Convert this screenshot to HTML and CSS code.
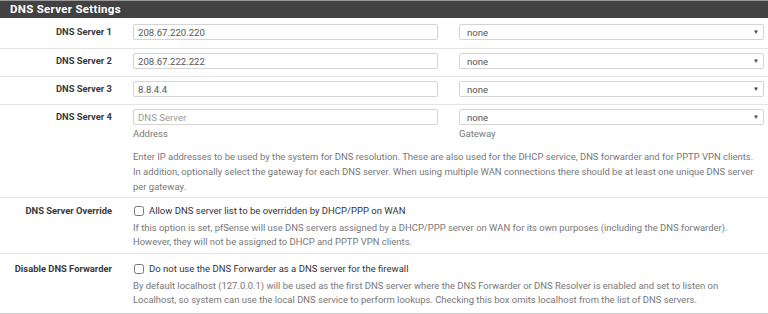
FILE: index.html
```html
<!DOCTYPE html>
<html lang="en">
<head>
    <meta charset="UTF-8">
    <meta name="viewport" content="width=device-width, initial-scale=1.0">
    <title>DNS Server Settings</title>
    <link rel="stylesheet" href="styles.css">
</head>
<body>
    <div class="panel">
        <div class="panel-heading">DNS Server Settings</div>
        <div class="panel-body">
            <div class="form-row first">
                <label class="row-label">DNS Server 1</label>
                <div class="row-content">
                    <div class="pair">
                        <input type="text" class="field" value="208.67.220.220">
                        <div class="select-wrap">
                            <select class="field"><option>none</option></select>
                            <span class="caret">&#9660;</span>
                        </div>
                    </div>
                </div>
            </div>
            <div class="form-row">
                <label class="row-label">DNS Server 2</label>
                <div class="row-content">
                    <div class="pair">
                        <input type="text" class="field" value="208.67.222.222">
                        <div class="select-wrap">
                            <select class="field"><option>none</option></select>
                            <span class="caret">&#9660;</span>
                        </div>
                    </div>
                </div>
            </div>
            <div class="form-row">
                <label class="row-label">DNS Server 3</label>
                <div class="row-content">
                    <div class="pair">
                        <input type="text" class="field" value="8.8.4.4">
                        <div class="select-wrap">
                            <select class="field"><option>none</option></select>
                            <span class="caret">&#9660;</span>
                        </div>
                    </div>
                </div>
            </div>
            <div class="form-row tall">
                <label class="row-label">DNS Server 4</label>
                <div class="row-content">
                    <div class="pair">
                        <input type="text" class="field" placeholder="DNS Server">
                        <div class="select-wrap">
                            <select class="field"><option>none</option></select>
                            <span class="caret">&#9660;</span>
                        </div>
                    </div>
                    <div class="pair captions">
                        <span>Address</span>
                        <span>Gateway</span>
                    </div>
                    <p class="help">Enter IP addresses to be used by the system for DNS resolution. These are also used for the DHCP service, DNS forwarder and for PPTP VPN clients.<br>In addition, optionally select the gateway for each DNS server. When using multiple WAN connections there should be at least one unique DNS server<br>per gateway.</p>
                </div>
            </div>
            <div class="form-row check-row">
                <label class="row-label">DNS Server Override</label>
                <div class="row-content">
                    <label class="check"><input type="checkbox"> Allow DNS server list to be overridden by DHCP/PPP on WAN</label>
                    <p class="help">If this option is set, pfSense will use DNS servers assigned by a DHCP/PPP server on WAN for its own purposes (including the DNS forwarder).<br>However, they will not be assigned to DHCP and PPTP VPN clients.</p>
                </div>
            </div>
            <div class="form-row check-row last">
                <label class="row-label">Disable DNS Forwarder</label>
                <div class="row-content">
                    <label class="check"><input type="checkbox"> Do not use the DNS Forwarder as a DNS server for the firewall</label>
                    <p class="help">By default localhost (127.0.0.1) will be used as the first DNS server where the DNS Forwarder or DNS Resolver is enabled and set to listen on<br>Localhost, so system can use the local DNS service to perform lookups. Checking this box omits localhost from the list of DNS servers.</p>
                </div>
            </div>
        </div>
    </div>
</body>
</html>
```

FILE: styles.css
```css
body {
    margin: 0;
    padding: 0;
    font-family: Roboto, "Liberation Sans", sans-serif;
    background-color: #ffffff;
    color: #333333;
}

.panel {
    border-top: 1px solid #9a9a9a;
}

.panel-heading {
    height: 17px;
    line-height: 17px;
    padding-left: 10px;
    background-color: #424242;
    color: #ffffff;
    font-size: 11.5px;
    font-weight: bold;
    letter-spacing: 0.3px;
}

.form-row {
    display: grid;
    grid-template-columns: 112px 1fr;
    column-gap: 21px;
    padding: 4px 0 7px 0;
    border-bottom: 1px solid #e4e4e4;
}

.form-row.first {
    padding-top: 6px;
    padding-bottom: 8px;
}

.row-label {
    text-align: right;
    font-size: 9.4px;
    font-weight: bold;
    color: #3a3a3a;
    line-height: 16px;
}

.pair {
    display: flex;
    gap: 21px;
    padding-right: 4px;
}

.field {
    display: block;
    box-sizing: border-box;
    width: 305px;
    height: 16px;
    margin: 0;
    padding: 0 4px;
    border: 1px solid #d4d4d4;
    border-radius: 2px;
    background-color: #ffffff;
    font-family: Roboto, "Liberation Sans", sans-serif;
    font-size: 9.6px;
    color: #555555;
    outline: none;
}

.field::placeholder {
    color: #999999;
}

.select-wrap {
    position: relative;
    width: 305px;
    height: 16px;
}

.select-wrap select {
    appearance: none;
    -webkit-appearance: none;
    padding-left: 7px;
}

.caret {
    position: absolute;
    right: 5px;
    top: 4px;
    font-size: 6px;
    line-height: 8px;
    color: #444444;
}

.captions {
    margin-top: 1px;
    font-size: 9.5px;
    line-height: 15px;
    color: #777777;
}

.captions span {
    width: 305px;
}

.help {
    margin: 8px 0 0 0;
    font-size: 9.45px;
    line-height: 15px;
    color: #777777;
}

.tall {
    padding-bottom: 3px;
}

.check-row {
    padding-top: 5px;
    padding-bottom: 4px;
}

.check-row.last {
    padding-top: 7px;
    padding-bottom: 6px;
    border-bottom-color: #cfcfcf;
}

.check-row .help {
    margin-top: 2px;
    line-height: 14px;
}

.check {
    display: flex;
    align-items: center;
    gap: 5px;
    font-size: 9.5px;
    line-height: 16px;
    color: #333333;
}

.check input {
    width: 10px;
    height: 10px;
    margin: 0 0 0 1px;
}
```
